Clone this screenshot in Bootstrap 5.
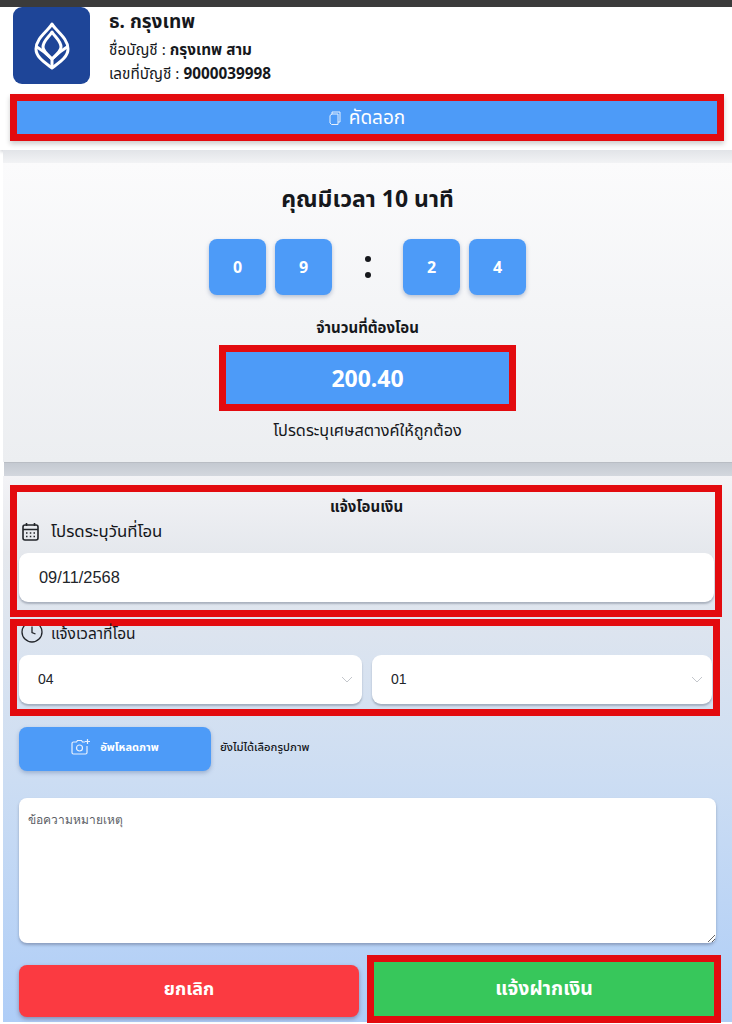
<!DOCTYPE html>
<html lang="th">
<head>
  <meta charset="UTF-8" />
  <meta name="viewport" content="width=device-width, initial-scale=1" />
  <title>แจ้งโอนเงิน</title>
  <link href="https://cdn.jsdelivr.net/npm/bootstrap@5.3.0/dist/css/bootstrap.min.css" rel="stylesheet" />
  <style>
    html, body { height: 1024px; overflow: hidden; }
    body {
      background: #fff;
      color: #16181c;
      font-family: "Noto Sans", "Noto Sans Thai", "DejaVu Sans", sans-serif;
    }
    .top-strip { height: 7px; background: #3b3b3b; }

    /* bank block */
    .bank-block { height: 143px; padding: 0 10px 0 13px; box-shadow: 0 2px 3px rgba(90,100,115,.25); }
    .bank-head { height: 77px; }
    .bank-logo { width: 77px; height: 77px; background: #1e4598; border-radius: 9px; }
    .bank-info { margin-left: 3px; }
    .bank-name { font-size: 19px; line-height: 28px; font-weight: 700; margin-bottom: 2px; }
    .bank-line { font-size: 15.3px; line-height: 24px; }
    .red-box { border: 7px solid #e30b0f; }
    .copy-box { margin: 10px 0 0 -3px; height: 47px; width: 714px; box-shadow: 0 3px 5px rgba(0,0,0,.2); }
    .blue-fill { background: #4d9bf8; color: #fff; }
    .copy-fill { height: 100%; font-size: 19px; gap: 8px; }

    .grey-band { height: 13px; margin-left: 3px; background: linear-gradient(#e2e4e8, #f2f3f5); }
    .grey-band-low { height: 14px; background: linear-gradient(#c4c9d1, #d3d7de); border-top: 1px solid #b9bdc4; }

    /* countdown */
    .timer-block { height: 299px; margin-left: 3px; background: linear-gradient(#fbfbfc, #eceef1); padding-top: 19px; }
    .timer-title { font-size: 23px; line-height: 32px; font-weight: 700; margin: 0; }
    .timer-row { margin-top: 25px; height: 56px; padding-left: 206px; }
    .timer-tile {
      width: 57px; height: 56px; border-radius: 8px; font-size: 16px; font-weight: 700;
      box-shadow: 0 2px 4px rgba(60,90,140,.35);
    }
    .timer-row .timer-tile + .timer-tile { margin-left: 9px; }
    .timer-colon { width: 71px; gap: 10px; }
    .timer-dot { width: 6px; height: 6px; border-radius: 50%; background: #16181c; }
    .amount-label { font-size: 15px; line-height: 20px; font-weight: 700; margin: 22px 0 8px; }
    .amount-box { width: 297px; height: 66px; }
    .amount-fill { height: 100%; font-size: 23px; font-weight: 700; }
    .amount-note { font-size: 16.3px; line-height: 22px; margin: 8px 0 0; }

    /* form */
    .form-block {
      height: 546px; margin-left: 3px; padding: 9px 10px 0 7px;
      background: linear-gradient(#f3f3f6 0, #e5e8ed 14%, #ccddf3 56%, #aecdf7 100%);
    }
    .date-box { height: 132px; width: 712px; padding: 0 1px 0 2px; }
    .form-head { font-size: 15px; line-height: 20px; font-weight: 700; margin: 4px 0 0; }
    .field-label { font-size: 15.5px; line-height: 20px; padding-left: 3px; }
    .date-label { margin: 5px 0 12px; font-size: 16.8px; gap: 12px; }
    .soft-input.form-control, .soft-input.form-select {
      border: 0; border-radius: 9px; height: 49px; color: #22252a;
      box-shadow: 0 2px 2px rgba(70,80,100,.35);
      font-family: "Liberation Sans", sans-serif;
    }
    .date-input.form-control { padding-left: 20px; font-size: 16.4px; }
    .soft-input.form-select {
      font-size: 14px; padding-left: 19px;
      background-size: 12px 9px; background-position: right 9px center;
      background-image: url("data:image/svg+xml,%3csvg xmlns='http://www.w3.org/2000/svg' viewBox='0 0 12 9'%3e%3cpath fill='none' stroke='%23c4c7cc' d='M1 2l5 5 5-5'/%3e%3c/svg%3e");
    }
    .time-box { height: 97px; width: 710px; margin-top: 2px; padding: 0 1px 0 2px; }
    .time-label { height: 17px; align-items: flex-end; margin-bottom: 12px; gap: 8px; }
    .clock-clip { flex: none; height: 17px; margin-left: -1px; overflow: hidden; display: flex; align-items: flex-end; }
    .time-pick { gap: 10px; }
    .time-hour { flex: 0 0 343px; width: 343px; }
    .upload-row { margin: 11px 0 0 9px; gap: 9px; }
    .upload-btn.btn {
      width: 192px; height: 44px; border: 0; border-radius: 8px; font-size: 11px; font-weight: 700;
      gap: 9px; padding: 0 0 4px; box-shadow: 0 2px 4px rgba(60,90,140,.35);
    }
    .upload-note { font-size: 11.3px; font-weight: 500; margin-bottom: 4px; }
    .note-area.form-control {
      display: block; width: 697px; height: 145px; margin: 27px 0 0 9px; padding: 13px 9px;
      border: 0; border-radius: 8px; font-size: 12px;
      box-shadow: 0 2px 3px rgba(70,80,110,.4);
    }
    .note-area.form-control::placeholder { color: #5c6066; opacity: 1; font-family: "Noto Sans", sans-serif; }
    .action-row { margin: 12px 0 0 9px; gap: 8px; align-items: flex-start; }
    .action-btn.btn {
      height: 52px; border: 0; border-radius: 8px; color: #fff; font-size: 18px; font-weight: 700;
    }
    .cancel-btn.btn { width: 340px; margin-top: 10px; padding: 0 0 5px; background: #fb3a41; box-shadow: 0 2px 4px rgba(80,60,90,.45); }
    .submit-box { width: 354px; height: 68px; }
    .submit-btn.btn { width: 100%; height: 54px; padding: 0 0 2px; border-radius: 0; background: #37c75b; font-size: 19.4px; }
  </style>
</head>
<body>

  <div class="top-strip"></div>

  <section class="bank-block">
    <div class="bank-head d-flex gap-3">
      <div class="bank-logo d-flex align-items-center justify-content-center flex-shrink-0">
        <svg width="36" height="48" viewBox="0 0 36 48" fill="none" stroke="#fff" stroke-width="3" stroke-linejoin="round" stroke-linecap="round">
          <path d="M18 2 C22 9 34 16 34 27 C34 35 26 40 18 46 C10 40 2 35 2 27 C2 16 14 9 18 2 Z" />
          <path d="M18 10 C15 15 9 19 9 25 C9 29 14 33 18 37 C22 33 27 29 27 25 C27 19 21 15 18 10 Z" />
          <path d="M3 25 C8 28 14 33 18 37 C22 33 28 28 33 25 M18 37 V45" />
        </svg>
      </div>
      <div class="bank-info">
        <div class="bank-name">ธ. กรุงเทพ</div>
        <div class="bank-line">ชื่อบัญชี : <strong>กรุงเทพ สาม</strong></div>
        <div class="bank-line">เลขที่บัญชี : <strong>9000039998</strong></div>
      </div>
    </div>
    <div class="copy-box red-box">
      <div class="copy-fill blue-fill d-flex align-items-center justify-content-center">
        <svg width="12" height="14" viewBox="0 0 12 14" fill="none" stroke="#e8f1fd" stroke-width="1">
          <path d="M1 4.500 L3 3 H9 V13.500 H2.500 L1 12 Z" />
          <path d="M3 3 V1 H11 V11 H9" />
        </svg>
        <span>คัดลอก</span>
      </div>
    </div>
  </section>

  <div class="grey-band"></div>

  <section class="timer-block text-center">
    <h1 class="timer-title">คุณมีเวลา 10 นาที</h1>
    <div class="timer-row d-flex">
      <div class="timer-tile blue-fill d-flex align-items-center justify-content-center">0</div>
      <div class="timer-tile blue-fill d-flex align-items-center justify-content-center">9</div>
      <div class="timer-colon d-flex flex-column align-items-center justify-content-center">
        <span class="timer-dot"></span>
        <span class="timer-dot"></span>
      </div>
      <div class="timer-tile blue-fill d-flex align-items-center justify-content-center">2</div>
      <div class="timer-tile blue-fill d-flex align-items-center justify-content-center">4</div>
    </div>
    <p class="amount-label">จำนวนที่ต้องโอน</p>
    <div class="amount-box red-box mx-auto">
      <div class="amount-fill blue-fill d-flex align-items-center justify-content-center">200.40</div>
    </div>
    <p class="amount-note">โปรดระบุเศษสตางค์ให้ถูกต้อง</p>
  </section>

  <div class="grey-band-low ms-1"></div>

  <section class="form-block">
    <div class="date-box red-box">
      <p class="form-head text-center">แจ้งโอนเงิน</p>
      <label class="field-label date-label d-flex align-items-center" for="dateField">
        <svg width="17" height="19" viewBox="0 0 17 19" fill="none" stroke="#22252a" stroke-width="1.6">
          <rect x="1" y="3" width="15" height="15" rx="2" />
          <path d="M1 7.500h15M4.500 1v3M12.500 1v3" />
          <path d="M4 11h1.500M7.800 11h1.500M11.500 11h1.500M4 14.500h1.500M7.800 14.500h1.500M11.500 14.500h1.500" />
        </svg>
        <span>โปรดระบุวันที่โอน</span>
      </label>
      <input id="dateField" type="text" class="form-control soft-input date-input" value="09/11/2568" />
    </div>

    <div class="time-box red-box">
      <div class="field-label time-label d-flex">
        <span class="clock-clip">
          <svg class="flex-shrink-0" width="22" height="22" viewBox="0 0 22 22" fill="none" stroke="#22252a" stroke-width="1.3">
            <circle cx="11" cy="11" r="10" />
            <path d="M11 5.500v6l3.500 1.500" />
          </svg>
        </span>
        <span>แจ้งเวลาที่โอน</span>
      </div>
      <div class="time-pick d-flex">
        <select class="form-select soft-input time-hour" aria-label="ชั่วโมง"><option>04</option></select>
        <select class="form-select soft-input" aria-label="นาที"><option>01</option></select>
      </div>
    </div>

    <div class="upload-row d-flex align-items-center">
      <button type="button" class="btn upload-btn blue-fill d-flex align-items-center justify-content-center">
        <svg width="20" height="18" viewBox="0 0 20 18" fill="none" stroke="#e8f1fd" stroke-width="1.2">
          <path d="M14 4h-2.500l-1-1.500h-4L5.500 4H2.500A1.500 1.500 0 0 0 1 5.500v9A1.500 1.500 0 0 0 2.500 16h12a1.500 1.500 0 0 0 1.500-1.500V8" />
          <circle cx="8.500" cy="10" r="3" />
          <path d="M16.500 1v5M14 3.500h5" />
        </svg>
        <span>อัพโหลดภาพ</span>
      </button>
      <span class="upload-note">ยังไม่ได้เลือกรูปภาพ</span>
    </div>

    <textarea class="form-control note-area" placeholder="ข้อความหมายเหตุ"></textarea>

    <div class="action-row d-flex">
      <button type="button" class="btn action-btn cancel-btn">ยกเลิก</button>
      <div class="submit-box red-box">
        <button type="button" class="btn action-btn submit-btn">แจ้งฝากเงิน</button>
      </div>
    </div>
  </section>

  <script src="https://cdn.jsdelivr.net/npm/bootstrap@5.3.0/dist/js/bootstrap.bundle.min.js"></script>
</body>
</html>
